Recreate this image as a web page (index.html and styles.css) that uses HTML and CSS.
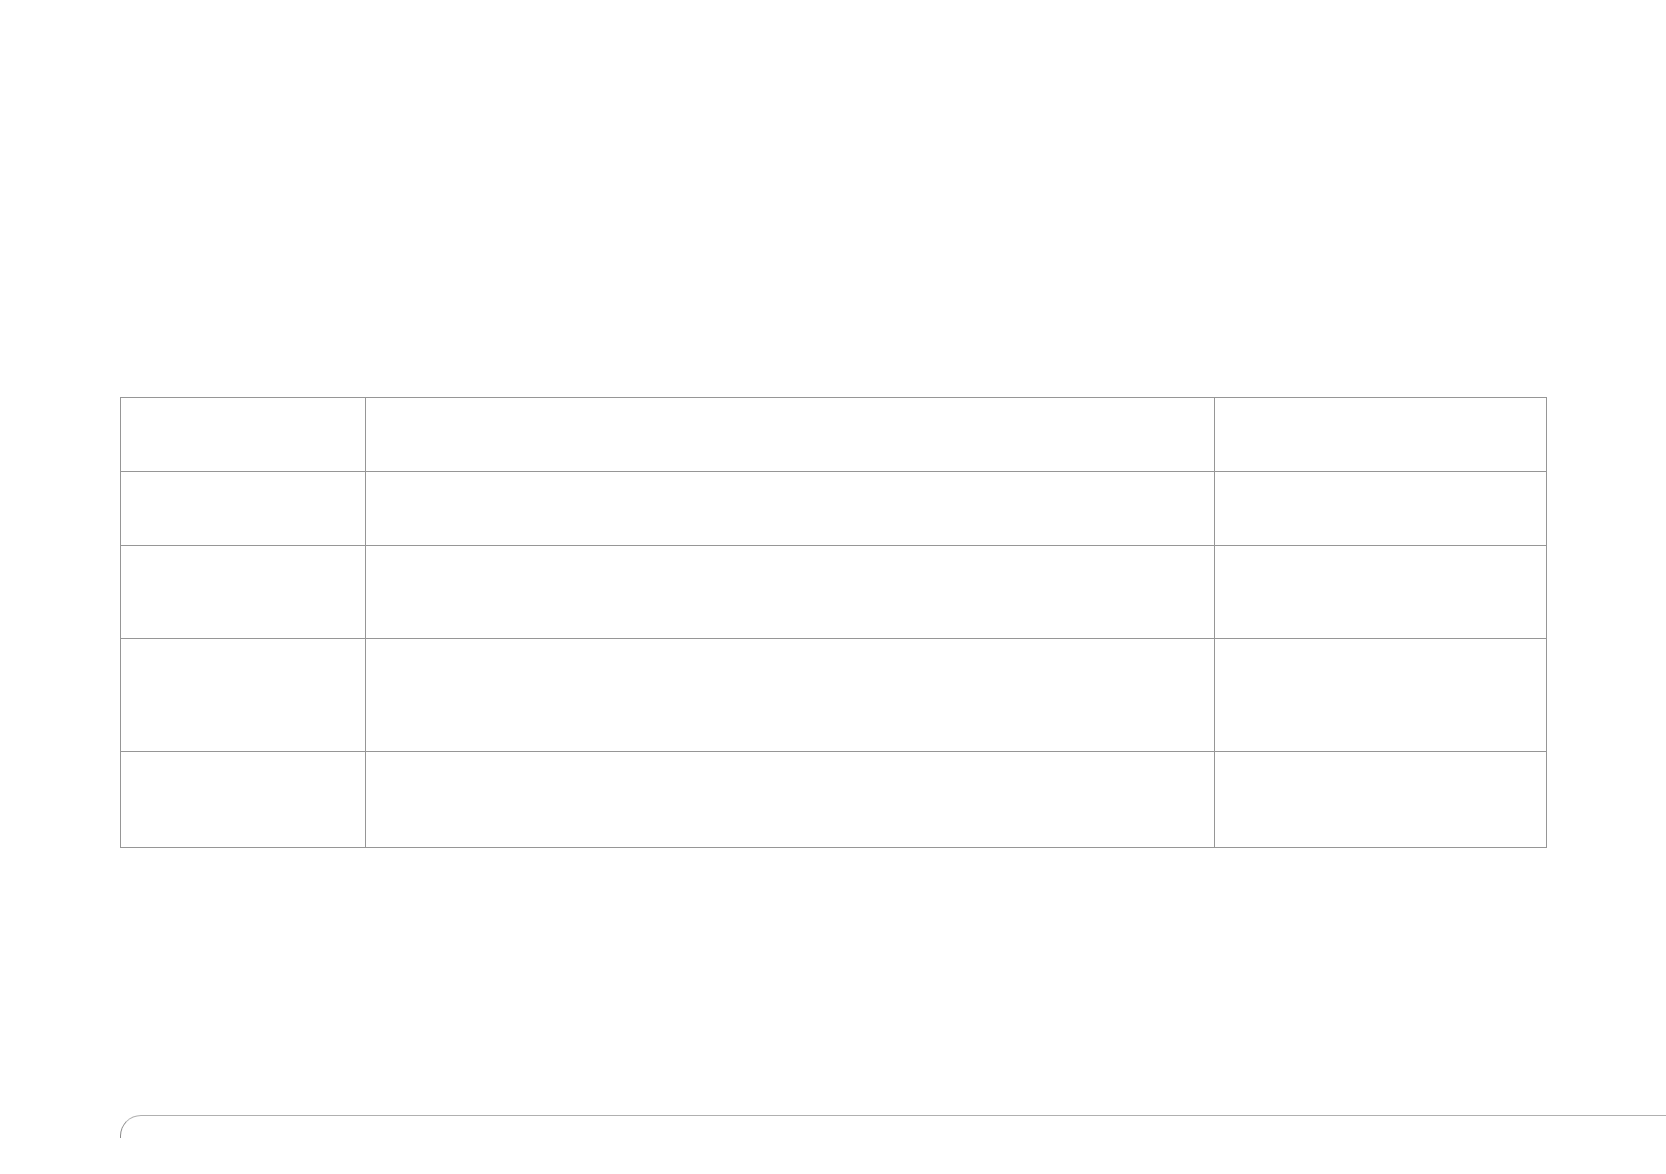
FILE: index.html
```html
<!DOCTYPE html>
<html>
<head>
<meta charset="utf-8">
<link rel="stylesheet" href="styles.css">
</head>
<body>
<div class="page">
  <div class="grid">
    <div class="cell"></div><div class="cell"></div><div class="cell"></div>
    <div class="cell"></div><div class="cell"></div><div class="cell"></div>
    <div class="cell"></div><div class="cell"></div><div class="cell"></div>
    <div class="cell"></div><div class="cell"></div><div class="cell"></div>
    <div class="cell"></div><div class="cell"></div><div class="cell"></div>
  </div>
  <div class="footer"></div>
</div>
</body>
</html>
```
FILE: styles.css
```css
html, body {
  margin: 0;
  padding: 0;
  background: #ffffff;
  font-family: "Liberation Sans", Arial, sans-serif;
}
.page {
  padding-top: 397px;
}
.grid {
  margin-left: 120px;
  width: 1427px;
  box-sizing: border-box;
  display: grid;
  grid-template-columns: 244px 848px 331px;
  grid-template-rows: 73px 73px 92px 112px 95px;
  gap: 1px;
  padding: 1px;
  background: #969696;
}
.cell {
  background: #ffffff;
}
.footer {
  margin-top: 267px;
  margin-left: 120px;
  height: 22px;
  border-top: 1px solid #b0b0b0;
  border-left: 1px solid #8a8a8a;
  border-top-left-radius: 21px 21px;
}
```
